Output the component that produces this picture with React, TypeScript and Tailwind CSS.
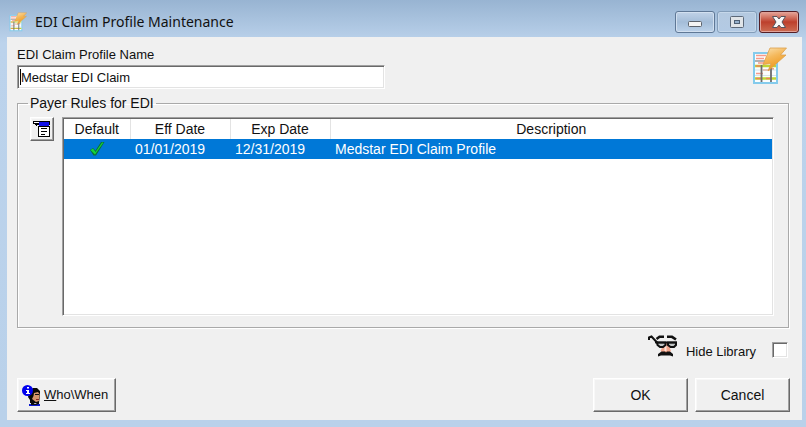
import React, { useState } from "react";

const raised =
  "border border-t-white border-l-white border-r-[#696969] border-b-[#696969] shadow-[inset_-1px_-1px_0_#a0a0a0,inset_1px_1px_0_#f8f8f8] bg-[#f0f0f0]";
const sunken =
  "border border-t-[#a0a0a0] border-l-[#a0a0a0] border-r-white border-b-white shadow-[inset_1px_1px_0_#696969,inset_-1px_-1px_0_#e3e3e3] bg-white";

function ClaimIcon({ className }: { className: string }) {
  return (
    <svg viewBox="0 0 35 38" className={className} aria-hidden="true">
      <defs>
        <linearGradient id="bolt" x1="0" y1="0" x2="0.4" y2="1">
          <stop offset="0" stopColor="#fbe3b4" />
          <stop offset="0.45" stopColor="#f5b95c" />
          <stop offset="1" stopColor="#ec9418" />
        </linearGradient>
      </defs>
      <rect x="2" y="6" width="23" height="30" fill="#fbfdfd" stroke="#84cbec" strokeWidth="2" />
      <path d="M4 8.500h10M4 11.500h8M6 16h8M4 26.500h7" stroke="#f69a8b" strokeWidth="1.6" />
      <path d="M3 14h11" stroke="#b0b0b0" strokeWidth="2" />
      <path d="M3 19h21M3 31.500h21" stroke="#bfd733" strokeWidth="2.4" />
      <path d="M4 31.500h5M14 31.500h4M4 19h4M11 23h7M18 22h4" stroke="#f0835a" strokeWidth="1.4" />
      <path d="M3 23h21M3 28.500h21" stroke="#d5e4ea" strokeWidth="1" />
      <path d="M9.500 18v17M19 21v14" stroke="#6d6d6d" strokeWidth="1.8" />
      <path d="M18 1H34.500L28.500 8H34L16 24L19 16.500L11 17.500Z" fill="url(#bolt)" stroke="#dc9f4a" strokeWidth="0.8" />
    </svg>
  );
}

function ListIcon() {
  return (
    <svg viewBox="0 0 18 18" className="h-[18px] w-[18px]" aria-hidden="true" shapeRendering="crispEdges">
      <path d="M0 1h17v4H0z" fill="#000" />
      <path d="M1 2h5v1H1z" fill="#fff" />
      <path d="M6 2h10v4H6z" fill="#1010e8" />
      <path d="M2 4h3v1H2zM3 5h1v1H3z" fill="#000" />
      <path d="M0 4h2v1H0z" fill="#f0f0f0" />
      <path d="M5 6h12v11H5z" fill="#000" />
      <path d="M6 7h10v9H6z" fill="#fff" />
      <path d="M8 8h6v1H8zM8 11h6v1H8zM8 14h4v1H8z" fill="#000" />
    </svg>
  );
}

function CheckIcon() {
  return (
    <svg viewBox="0 0 16 16" className="mx-auto h-4 w-4" aria-label="Default" role="img">
      <path d="M1 9L4 7L6.500 9.500L12 1L15.500 1L7 14.500H4.500Z" fill="#0a6f38" />
      <path d="M1.500 9L4 7.500L6.500 11L13 1.500L14.500 1.500L6 13.500Z" fill="#14d43a" />
    </svg>
  );
}

function DisguiseIcon() {
  return (
    <svg viewBox="0 0 30 24" className="h-6 w-[30px]" aria-hidden="true">
      <path d="M16 9L12.500 17L15 19H20.500L23 17L20 9Z" fill="#f2a58c" />
      <path d="M17.500 11v6" stroke="#fde3d8" strokeWidth="2" />
      <path d="M1 6V3.500L3.500 2.500L10 9.500" fill="none" stroke="#111" strokeWidth="2" />
      <path d="M8.500 5L11.500 2.800H16M19 2.800H24L28 5.500" fill="none" stroke="#111" strokeWidth="2.600" />
      <path d="M9 8.500H17.500V11L15 13H12L9.500 11ZM20 8.500H28V11L26 13H22.500L20 11Z" fill="#c2c6c6" stroke="#111" strokeWidth="2" />
      <path d="M7 8.500H29" stroke="#111" strokeWidth="1.800" />
      <path d="M10 22.500V20L13.500 17.500H17L18 18.500L19 17.500H22L25 20V22.500L22 21.500H13Z" fill="#111" />
    </svg>
  );
}

function WhoIcon() {
  return (
    <svg viewBox="0 0 19 21" className="h-[21px] w-[19px] shrink-0" aria-hidden="true">
      <path d="M8 5L11 3H15L18 6V10L17 18H8V15L6 12Z" fill="#080808" />
      <path d="M12 8L16 7L17.500 9V12L17 13V16L14 17L10 14L11.500 11Z" fill="#d2946c" />
      <path d="M13 9.500h4" stroke="#111" />
      <path d="M14 14.500h3" stroke="#8c2b22" />
      <path d="M7 19h11v2H7z" fill="#0d1ad0" />
      <path d="M9 16l4 3l4-2v2l-3 1h-5z" fill="#0a0a0a" />
      <circle cx="5.500" cy="5.500" r="5.500" fill="#0000ee" />
      <path d="M5 2h2v1.500H5zM4 5h3v3h1v1H4V8h1V6H4z" fill="#fff" />
    </svg>
  );
}

function TitleButton({ label, tone, children }: { label: string; tone: string; children: React.ReactNode }) {
  return (
    <button
      type="button"
      aria-label={label}
      className={`flex h-[22px] w-10 items-center justify-center rounded-[3px] border ${tone}`}
    >
      {children}
    </button>
  );
}

const rules = [{ eff: "01/01/2019", exp: "12/31/2019", description: "Medstar EDI Claim Profile" }];

export default function App() {
  const [name, setName] = useState("Medstar EDI Claim");
  const [hidden, setHidden] = useState(false);

  return (
    <div className="flex min-h-screen flex-col bg-linear-to-b from-[#98b4d2] via-[#bcd3ec] via-10% to-[#b9d1ea] pr-1 pb-[7px] pl-[7px] font-['Liberation_Sans',Arial,sans-serif] text-sm text-[#111]">
      <header className="flex h-[37px] shrink-0 items-center pt-[6px]">
        <ClaimIcon className="mr-2 ml-[2px] h-5 w-[18px]" />
        <h1 className="flex-1 font-['Noto_Sans','Open_Sans',sans-serif] text-sm leading-5">EDI Claim Profile Maintenance</h1>
        <div className="mr-[3px] flex gap-[2px]">
          <TitleButton
            label="Minimize"
            tone="border-[#5f7896] bg-linear-to-b from-[#c0d2e7] via-[#a4bdd8] to-[#bcd2ea] shadow-[inset_0_0_0_1px_#d2e0f0]"
          >
            <svg viewBox="0 0 16 14" className="h-[14px] w-4" aria-hidden="true">
              <rect x="1.500" y="6.500" width="13" height="5" rx="1" fill="#f4f4f4" stroke="#5c626b" />
            </svg>
          </TitleButton>
          <TitleButton
            label="Maximize"
            tone="border-[#839db9] bg-linear-to-b from-[#b4c9e0] to-[#b3cae4] shadow-[inset_0_0_0_1px_#c5d7ea]"
          >
            <svg viewBox="0 0 16 14" className="h-[14px] w-4" aria-hidden="true">
              <rect x="1.500" y="1.500" width="13" height="11" rx="1" fill="#e0e4e8" stroke="#5c6878" />
              <rect x="5.500" y="5.500" width="5" height="3" fill="#96b0cc" stroke="#4f5f73" />
            </svg>
          </TitleButton>
          <TitleButton
            label="Close"
            tone="border-[#541e25] bg-linear-to-b from-[#e5a69b] via-[#bd3f2c] to-[#cc6c52] shadow-[inset_0_0_0_1px_#e2a298]"
          >
            <svg viewBox="0 0 16 14" className="h-[14px] w-4" aria-hidden="true">
              <path
                d="M1.500 1.500H6L8 4L10 1.500H14.500L11 7L14.500 12.500H10L8 10L6 12.500H1.500L5 7Z"
                fill="#f7f7f7"
                stroke="#57535b"
              />
            </svg>
          </TitleButton>
        </div>
      </header>

      <main className="flex flex-1 flex-col bg-[#f0f0f0] pt-2 pr-3 pb-2 pl-[10px]">
        <div className="flex items-start justify-between">
          <div className="w-[368px]">
            <label htmlFor="profile-name" className="block text-[13px] leading-5">
              EDI Claim Profile Name
            </label>
            <div className="relative">
              <input
                id="profile-name"
                type="text"
                value={name}
                onChange={(e) => setName(e.target.value)}
                className={`block h-6 w-full px-[3px] text-[13px] outline-none ${sunken}`}
              />
              <span className="absolute top-1 left-[3px] h-4 w-px bg-black" />
            </div>
          </div>
          <ClaimIcon className="mt-[2px] mr-[3px] h-[38px] w-[35px]" />
        </div>

        <fieldset className="mt-1 mr-px min-w-0 border border-[#a9a9a9] pr-[14px] pb-[11px] pl-3 shadow-[inset_1px_1px_0_#fff,1px_1px_0_#fff]">
          <legend className="-ml-[2px] px-[2px] leading-5">Payer Rules for EDI</legend>
          <div className="mt-1 flex items-start gap-2">
            <button type="button" aria-label="Rule options" className={`flex h-6 w-6 items-center justify-center ${raised}`}>
              <ListIcon />
            </button>
            <div className={`min-h-[199px] flex-1 p-px ${sunken}`}>
              <table className="w-full table-fixed border-collapse">
                <thead>
                  <tr className="h-5 leading-5">
                    <th className="w-[66px] border-r border-[#e3e3e3] p-0 text-center font-normal">Default</th>
                    <th className="w-[100px] border-r border-[#e3e3e3] p-0 text-center font-normal">Eff Date</th>
                    <th className="w-[100px] border-r border-[#e3e3e3] p-0 text-center font-normal">Exp Date</th>
                    <th className="p-0 text-center font-normal">Description</th>
                  </tr>
                </thead>
                <tbody>
                  {rules.map((r) => (
                    <tr key={r.eff} className="h-5 bg-[#0078d7] leading-5 text-white">
                      <td className="p-0">
                        <CheckIcon />
                      </td>
                      <td className="py-0 pr-0 pl-[5px]">{r.eff}</td>
                      <td className="py-0 pr-0 pl-[5px]">{r.exp}</td>
                      <td className="py-0 pr-0 pl-[5px]">{r.description}</td>
                    </tr>
                  ))}
                </tbody>
              </table>
            </div>
          </div>
        </fieldset>

        <div className="mt-auto flex h-[30px] items-start justify-end pr-[2px]">
          <DisguiseIcon />
          <label htmlFor="hide-library" className="mt-2 ml-2 text-[13px] leading-5">
            Hide Library
          </label>
          <input
            id="hide-library"
            type="checkbox"
            checked={hidden}
            onChange={(e) => setHidden(e.target.checked)}
            className={`mt-2 ml-4 h-4 w-4 appearance-none checked:bg-[#0078d7] ${sunken}`}
          />
        </div>

        <footer className="mt-[14px] flex items-center gap-[7px]">
          <button type="button" className={`mr-auto flex h-[34px] w-[99px] items-center gap-[3px] pl-1 text-[13px] ${raised}`}>
            <WhoIcon />
            <span>
              <u>W</u>ho\When
            </span>
          </button>
          <button type="button" className={`h-[34px] w-[95px] ${raised}`}>
            OK
          </button>
          <button type="button" className={`h-[34px] w-[95px] ${raised}`}>
            Cancel
          </button>
        </footer>
      </main>
    </div>
  );
}
